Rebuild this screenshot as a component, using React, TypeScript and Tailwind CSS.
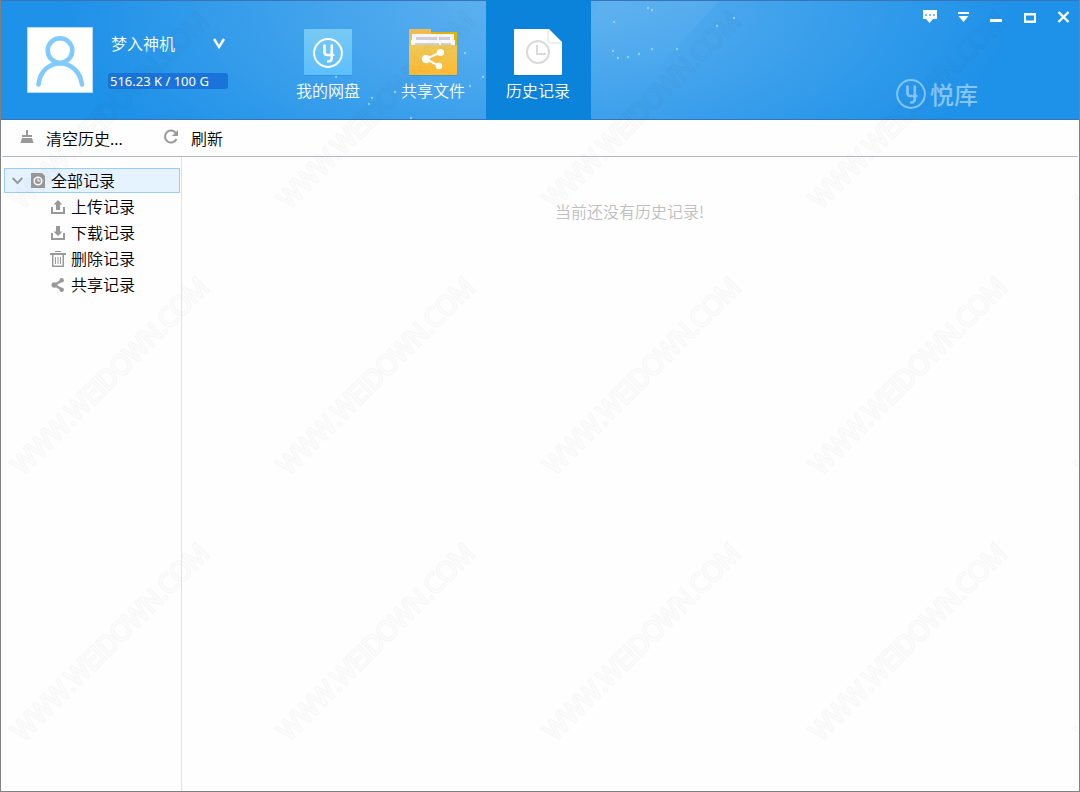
import { useState } from 'react'
import clsx from 'clsx'

interface Tab {
  id: string
  label: string
  icon: any
}

interface RecordType {
  id: string
  label: string
  icon: any
}

function YMark() {
  return (
    <>
      <circle cx="15" cy="15" r="13.9" fill="none" strokeWidth="2" />
      <path
        d="M11.500 7.500v6.500q0 3 3 3h5.800M18.800 7.500v12.500q0 3.500-3.800 3.500"
        fill="none"
        strokeWidth="2.600"
        strokeLinecap="round"
      />
    </>
  )
}

function DiskIcon() {
  return (
    <svg width="48" height="48" viewBox="0 0 48 48">
      <defs>
        <linearGradient id="disk" x1="0" y1="0" x2="0" y2="1">
          <stop offset="0" stopColor="#78c9f2" />
          <stop offset="1" stopColor="#5cbfff" />
        </linearGradient>
      </defs>
      <rect y="1" width="48" height="46" rx="1" fill="#1f78c4" opacity=".3" />
      <rect width="48" height="46" rx="1" fill="url(#disk)" />
      <g transform="translate(9 9)" stroke="#fff">
        <YMark />
      </g>
    </svg>
  )
}

function SharedIcon() {
  return (
    <svg width="48" height="48" viewBox="0 0 48 48">
      <defs>
        <linearGradient id="folder" x1="0" y1="0" x2="0" y2="1">
          <stop offset="0" stopColor="#edc858" />
          <stop offset="1" stopColor="#ffb931" />
        </linearGradient>
      </defs>
      <rect y="17" width="48" height="30" fill="#1f78c4" opacity=".3" />
      <path d="M20 3h28v14H20z" fill="#e3b505" />
      <path d="M0 1q0-1 1-1h20q1 0 1 1v16H0z" fill="#f0bb55" />
      <path d="M3 5h42v8H3z" fill="#f6f6f8" />
      <path d="M7 8h34v3H7z" fill="#d2ced8" />
      <path d="M2 11h44v6H2z" fill="#fbfbfc" />
      <path d="M6 14h36v2H6z" fill="#d2ced8" />
      <path d="M28 8h2v3h-2zM30 14h2v2h-2z" fill="#f6f6f8" />
      <path d="M0 16h48v29q0 1-1 1H1q-1 0-1-1z" fill="url(#folder)" />
      <path d="M31 23.500L17 30l13 7" fill="none" stroke="#fff" strokeWidth="2" />
      <circle cx="31.500" cy="23.500" r="3.600" fill="#fff" />
      <circle cx="17" cy="30" r="4.200" fill="#fff" />
      <circle cx="30" cy="37" r="3.200" fill="#fff" />
    </svg>
  )
}

function HistoryIcon() {
  return (
    <svg width="48" height="48" viewBox="0 0 48 48">
      <rect y="40" width="48" height="7" fill="#0869b5" opacity=".4" />
      <path d="M1 0h34l13 13v32q0 1-1 1H1q-1 0-1-1V1q0-1 1-1z" fill="#fff" />
      <path d="M34 0v12q0 2 2 2h12" fill="none" stroke="#e0e0e0" strokeWidth="1" />
      <circle cx="24" cy="23" r="11" fill="none" stroke="#dadada" strokeWidth="2" />
      <path d="M23 16v9h9" fill="none" stroke="#dadada" strokeWidth="2" />
    </svg>
  )
}

const tabs: Tab[] = [
  { id: 'disk', label: '我的网盘', icon: DiskIcon },
  { id: 'shared', label: '共享文件', icon: SharedIcon },
  { id: 'history', label: '历史记录', icon: HistoryIcon },
]

function UploadIcon() {
  return (
    <svg width="14" height="14" viewBox="0 0 14 14" fill="#999">
      <path d="M0 7h2v5h10V7h2v7H0z" />
      <path d="M7 0l4.500 4.500H9V10H5V4.500H2.500z" />
    </svg>
  )
}

function DownloadIcon() {
  return (
    <svg width="14" height="14" viewBox="0 0 14 14" fill="#999">
      <path d="M0 7h2v5h10V7h2v7H0z" />
      <path d="M7 10L2.500 5.500H5V0h4v5.500h2.500z" />
    </svg>
  )
}

function TrashIcon() {
  return (
    <svg width="16" height="16" viewBox="0 0 16 16" fill="#999" className="-mx-px">
      <path d="M5 0h6v1H5zM0 2h16v2H0z" />
      <path d="M2 4h1.500v10.500h9V4H14v12H2z" />
      <path d="M5 6h1v7H5zM7.500 6h1v7h-1zM10 6h1v7h-1z" />
    </svg>
  )
}

function ShareIcon() {
  return (
    <svg width="14" height="14" viewBox="0 0 14 14" fill="#999">
      <path d="M11 2.500L3.500 7l7.500 4.500" fill="none" stroke="#999" strokeWidth="2.400" />
      <circle cx="10.700" cy="2.300" r="2.200" />
      <circle cx="3.300" cy="7" r="2.800" />
      <circle cx="10.700" cy="11.700" r="2.200" />
    </svg>
  )
}

const recordTypes: RecordType[] = [
  { id: 'upload', label: '上传记录', icon: UploadIcon },
  { id: 'download', label: '下载记录', icon: DownloadIcon },
  { id: 'delete', label: '删除记录', icon: TrashIcon },
  { id: 'share', label: '共享记录', icon: ShareIcon },
]

const sparkles = [
  [464, 52], [482, 76], [469, 85], [394, 91], [371, 97], [368, 103], [410, 117], [335, 76],
  [613, 21], [647, 7], [651, 9], [612, 50], [617, 57], [627, 56], [638, 53], [651, 48],
  [676, 48], [716, 25], [733, 17],
]

function HeaderSky() {
  return (
    <svg className="pointer-events-none absolute inset-0 h-full w-full" aria-hidden="true">
      <defs>
        <linearGradient id="ray" x1="1" y1="0" x2="0" y2="1">
          <stop offset="0" stopColor="#fff" stopOpacity=".06" />
          <stop offset=".8" stopColor="#fff" stopOpacity="0" />
        </linearGradient>
      </defs>
      <path d="M718 0L648 76L560 76L600 0z" fill="url(#ray)" />
      {sparkles.map(([x, y]) => (
        <circle key={`${x}-${y}`} cx={x} cy={y} r="1.200" fill="#a5dcfb" opacity=".8" />
      ))}
    </svg>
  )
}

function Watermark() {
  return (
    <svg className="pointer-events-none absolute inset-0 h-full w-full" aria-hidden="true">
      <defs>
        {/* a wide stroke with its core cut out leaves hollow letters */}
        <mask id="hollow" maskUnits="userSpaceOnUse" x="0" y="0" width="266" height="266">
          <g
            transform="rotate(-45 133 133)"
            textAnchor="middle"
            fontFamily="Open Sans, sans-serif"
            fontSize="26"
          >
            <text x="133" y="142" fill="#fff" stroke="#fff" strokeWidth="3">
              WWW.WEIDOWN.COM
            </text>
            <text x="133" y="142" fill="#555" stroke="#555" strokeWidth="1">
              WWW.WEIDOWN.COM
            </text>
          </g>
        </mask>
        <pattern id="mark" x="-24" y="-24" width="266" height="266" patternUnits="userSpaceOnUse">
          <rect width="266" height="266" fill="#000" fillOpacity=".03" mask="url(#hollow)" />
        </pattern>
      </defs>
      <rect width="100%" height="100%" fill="url(#mark)" />
    </svg>
  )
}

function WindowButton({ label, children }: { label: string; children: any }) {
  return (
    <button aria-label={label} className="h-[33px] w-[33px] hover:bg-white/20">
      <svg width="33" height="33" viewBox="0 0 33 33" fill="#fff" stroke="none">
        {children}
      </svg>
    </button>
  )
}

export default function App() {
  const [activeTab, setActiveTab] = useState('history')
  const [activeRecord, setActiveRecord] = useState('all')
  const [expanded, setExpanded] = useState(true)

  return (
    <div className="relative flex min-h-screen flex-col border border-[#808080] bg-[#fefefe] font-['Noto_Sans_CJK_SC',sans-serif] text-base leading-6 font-[350] text-black">
      {/* Header */}
      <header className="relative -mt-px flex h-[120px] border-y border-[#3a74b8] bg-[#1e91e8] bg-[radial-gradient(ellipse_480px_220px_at_50%_0,#62b3f0,#1e91e8)] text-white">
        <HeaderSky />

        <div className="relative flex w-[275px] shrink-0 pt-[26px] pl-[26px]">
          <div className="h-[66px] w-[66px] border border-[#b5dcf8] bg-white">
            <svg width="64" height="64" viewBox="0 0 64 64" fill="none" stroke="#80caff" strokeWidth="4.600">
              <circle cx="32" cy="22.500" r="12.300" />
              <path d="M10.500 56.500C12 43 21 35.500 32 35.500S52 43 54 56.500" strokeLinecap="round" />
            </svg>
          </div>
          <div className="ml-[15px] w-[120px]">
            <button className="flex h-8 w-full items-center justify-between px-[3px]">
              <span>梦入神机</span>
              <svg width="12" height="12" viewBox="0 0 12 12" fill="none" stroke="#fff" strokeWidth="2.400">
                <path d="M1 2L6 10l5-8" />
              </svg>
            </button>
            <div className="mt-[14px] h-4 rounded-[3px] bg-[#1a73d8] px-0.5 font-['Noto_Sans','Noto_Sans_CJK_SC',sans-serif] text-[13px] leading-4 font-normal whitespace-nowrap">
              516.23 K / 100 G
            </div>
          </div>
        </div>

        <nav className="relative flex">
          {tabs.map((tab) => (
            <button
              key={tab.id}
              onClick={() => setActiveTab(tab.id)}
              className={clsx(
                'flex w-[105px] flex-col items-center pr-px',
                activeTab === tab.id ? '-my-px bg-[#0c83da] pt-[29px]' : 'pt-7'
              )}
            >
              <tab.icon />
              <span className="mt-px">{tab.label}</span>
            </button>
          ))}
        </nav>

        <div className="relative ml-auto flex flex-col items-end">
          <div className="flex">
            <WindowButton label="反馈">
              <path d="M9 9h14v9h-4l-3.500 4-3.500-4H9z" />
              <path d="M11 13h2v2h-2zM15 13h2v2h-2zM19 13h2v2h-2z" fill="#7cbef2" />
            </WindowButton>
            <WindowButton label="菜单">
              <path d="M11 11h11v2H11zM11.500 15h10l-5 6z" />
            </WindowButton>
            <WindowButton label="最小化">
              <path d="M10 18h12v3H10z" />
            </WindowButton>
            <WindowButton label="最大化">
              <path d="M11 12h12v10H11zM13 14.500v5h8v-5z" fillRule="evenodd" />
            </WindowButton>
            <WindowButton label="关闭">
              <path d="M12.500 11l10 10M22.500 11l-10 10" stroke="#fff" strokeWidth="2.400" />
            </WindowButton>
          </div>
          <div className="mt-11 mr-[101px] flex items-center gap-1 text-[#84c5f5]">
            <svg width="30" height="30" viewBox="0 0 30 30" stroke="#84c5f5">
              <YMark />
            </svg>
            <span className="text-2xl leading-8 font-medium">悦库</span>
          </div>
        </div>
      </header>

      {/* Toolbar */}
      <div className="mx-px flex h-[37px] items-center border-b border-[#b5b9cd] pl-[18px]">
        <button className="flex items-center gap-3">
          <svg width="14" height="14" viewBox="0 0 14 14" fill="#999" className="-mt-0.5">
            <path d="M6 0h2v5h4v2H2V5h4zM2 8h10l1.500 5H.5z" />
          </svg>
          <span>清空历史...</span>
        </button>
        <button className="ml-10 flex items-center gap-3">
          <svg width="16" height="16" viewBox="0 0 16 16" className="-mt-0.5">
            <path d="M13 4.200A6 6 0 1 0 13.500 10" fill="none" stroke="#999" strokeWidth="2" />
            <path d="M15 1v6H9z" fill="#999" />
          </svg>
          <span>刷新</span>
        </button>
      </div>

      <div className="flex flex-1">
        {/* Record tree */}
        <aside className="w-[181px] shrink-0 border-r border-[#e3e3e3] pt-[11px]">
          <div
            className={clsx(
              'mr-px mb-px ml-[3px] flex h-[25px] items-center border',
              activeRecord === 'all' ? 'border-[#99ccff] bg-[#e5f2ff]' : 'border-transparent'
            )}
          >
            <button aria-label="展开" onClick={() => setExpanded(!expanded)} className="px-[7px]">
              <svg width="11" height="8" viewBox="0 0 11 8" fill="none" stroke="#999" strokeWidth="2">
                <path d="M.7 1l4.800 5 4.800-5" />
              </svg>
            </button>
            <button
              onClick={() => setActiveRecord('all')}
              className="flex flex-1 items-center gap-1.5 pl-px leading-5"
            >
              <svg width="14" height="15" viewBox="0 0 14 15">
                <path d="M0 0h11l3 3v12H0z" fill="#999" />
                <circle cx="7" cy="8" r="3.800" fill="none" stroke="#fff" strokeWidth="1.500" />
                <path d="M7 5.500V8h2.500" fill="none" stroke="#fff" strokeWidth="1.200" />
              </svg>
              <span className="pb-0.5">全部记录</span>
            </button>
          </div>
          {expanded && (
            <ul>
              {recordTypes.map((record) => (
                <li key={record.id}>
                  <button
                    onClick={() => setActiveRecord(record.id)}
                    className={clsx(
                      'flex h-[26px] w-full items-center gap-1.5 pl-[50px] leading-5',
                      activeRecord === record.id && 'bg-[#e5f2ff]'
                    )}
                  >
                    <record.icon />
                    <span className="pb-0.5">{record.label}</span>
                  </button>
                </li>
              ))}
            </ul>
          )}
        </aside>

        <main className="flex-1 pt-[42px] pr-0.5 text-center text-[#bfbfbf]">当前还没有历史记录!</main>
      </div>

      <Watermark />
    </div>
  )
}
